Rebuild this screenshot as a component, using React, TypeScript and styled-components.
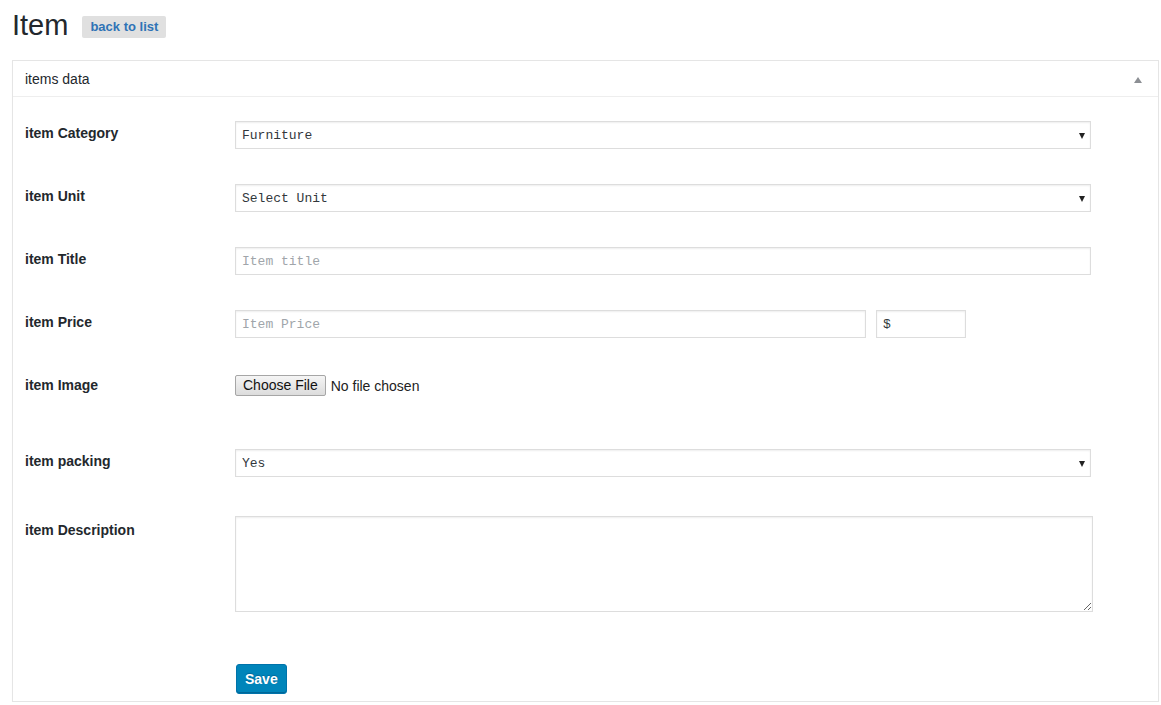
import { FC, ReactNode } from "react";
import styled, { createGlobalStyle } from "styled-components";

const GlobalStyle = createGlobalStyle`
  html, body {
    margin: 0;
    padding: 0;
    background: #fff;
  }
  body {
    font-family: "Liberation Sans", Arial, sans-serif;
    color: #23282d;
    font-size: 14px;
  }
`;

const Wrap = styled.div`
  padding: 0 2px 0 12px;
`;

const TitleBar = styled.div`
  display: flex;
  align-items: center;
  height: 60px;
  padding-bottom: 10px;
  box-sizing: border-box;
`;

const Title = styled.h1`
  margin: 0 14px 0 0;
  font-size: 29px;
  font-weight: 400;
  line-height: 1;
  color: #23282d;
`;

const BackLink = styled.a`
  display: inline-block;
  padding: 0 8px;
  height: 22px;
  line-height: 22px;
  background: #e0e0e0;
  border-radius: 2px;
  color: #2f73b6;
  font-weight: 700;
  font-size: 13px;
  text-decoration: none;
  margin-top: 3px;
`;

const Card = styled.div`
  border: 1px solid #e5e5e5;
  background: #fff;
  box-shadow: 0 1px 1px rgba(0, 0, 0, 0.04), 0 4px 0 #eeeeee;
`;

const CardHeader = styled.div`
  display: flex;
  align-items: center;
  justify-content: space-between;
  height: 35px;
  padding: 0 16px 0 12px;
  border-bottom: 1px solid #eeeeee;
  font-size: 14px;
  color: #23282d;
`;

const Toggle = styled.span`
  width: 0;
  height: 0;
  border-left: 4px solid transparent;
  border-right: 4px solid transparent;
  border-bottom: 6px solid #8c8f94;
  margin-top: 2px;
`;

const CardBody = styled.div`
  padding: 24px 12px 7px;
`;

const Row = styled.div<{ $space?: number }>`
  display: grid;
  grid-template-columns: 210px 1fr;
  align-items: start;
  margin-top: ${(p) => p.$space ?? 0}px;
`;

const Label = styled.label<{ $lift?: number }>`
  font-weight: 700;
  font-size: 14px;
  line-height: 20px;
  padding-top: ${(p) => p.$lift ?? 2}px;
  color: #23282d;
`;

const fieldBase = `
  box-sizing: border-box;
  height: 28px;
  border: 1px solid #dddddd;
  box-shadow: inset 0 1px 2px rgba(0, 0, 0, 0.07);
  background: #fff;
  color: #32373c;
  font-family: "Liberation Mono", "DejaVu Sans Mono", monospace;
  font-size: 13px;
  padding: 1px 6px 0;
  outline: none;
  &::placeholder {
    color: #a0a5aa;
  }
`;

const TextInput = styled.input<{ $width: number }>`
  ${fieldBase}
  width: ${(p) => p.$width}px;
`;

const InlineFields = styled.div`
  display: flex;
  gap: 10px;
`;

const SelectBox = styled.div`
  position: relative;
  width: 856px;

  &::after {
    content: "";
    position: absolute;
    right: 6px;
    top: 12px;
    border-left: 3.5px solid transparent;
    border-right: 3.5px solid transparent;
    border-top: 6px solid #222;
    pointer-events: none;
  }
`;

const Select = styled.select`
  ${fieldBase}
  width: 100%;
  appearance: none;
  -webkit-appearance: none;
  border-radius: 0;
  padding-right: 20px;
`;

const FileField = styled.div`
  display: flex;
  align-items: center;
  gap: 5px;
  font-size: 14px;
  color: #222;
`;

const FileButton = styled.label`
  box-sizing: border-box;
  display: inline-block;
  height: 21px;
  line-height: 19px;
  padding: 0 7px;
  border: 1px solid #a6a6a6;
  border-radius: 2px;
  background: linear-gradient(#f5f5f5, #dcdcdc);
  color: #111;
  font-size: 14px;

  input {
    display: none;
  }
`;

const TextArea = styled.textarea`
  box-sizing: border-box;
  width: 858px;
  height: 96px;
  border: 1px solid #dddddd;
  box-shadow: inset 0 1px 2px rgba(0, 0, 0, 0.07);
  font-family: "Liberation Mono", monospace;
  font-size: 13px;
  outline: none;
  display: block;
`;

const ActionRow = styled.div`
  display: flex;
  padding-left: 211px;
  margin-top: 52px;
`;

const SaveButton = styled.button`
  box-sizing: border-box;
  height: 30px;
  padding: 0 8px;
  background: #0085ba;
  border: 1px solid #0073aa;
  border-radius: 3px;
  box-shadow: inset 0 -1px 0 #006799;
  color: #fff;
  font-family: "Liberation Sans", Arial, sans-serif;
  font-weight: 700;
  font-size: 14px;
  text-shadow: 0 -1px 1px #006799;
  cursor: pointer;
`;

const SelectField: FC<{ value: string; options: string[] }> = ({ value, options }) => (
  <SelectBox>
    <Select defaultValue={value}>
      {options.map((o) => (
        <option key={o}>{o}</option>
      ))}
    </Select>
  </SelectBox>
);

const FieldRow: FC<{ label: string; space?: number; lift?: number; children: ReactNode }> = ({
  label,
  space,
  lift,
  children,
}) => (
  <Row $space={space}>
    <Label $lift={lift}>{label}</Label>
    <div>{children}</div>
  </Row>
);

const App: FC = () => {
  return (
    <>
      <GlobalStyle />
      <Wrap>
        <TitleBar>
          <Title>Item</Title>
          <BackLink href="#">back to list</BackLink>
        </TitleBar>
        <Card>
          <CardHeader>
            <span>items data</span>
            <Toggle />
          </CardHeader>
          <CardBody>
            <FieldRow label="item Category">
              <SelectField value="Furniture" options={["Furniture", "Electronics", "Clothing"]} />
            </FieldRow>
            <FieldRow label="item Unit" space={35}>
              <SelectField value="Select Unit" options={["Select Unit", "Piece", "Kg", "Box"]} />
            </FieldRow>
            <FieldRow label="item Title" space={35}>
              <TextInput $width={856} placeholder="Item title" />
            </FieldRow>
            <FieldRow label="item Price" space={35}>
              <InlineFields>
                <TextInput $width={631} placeholder="Item Price" />
                <TextInput $width={90} defaultValue="$" />
              </InlineFields>
            </FieldRow>
            <FieldRow label="item Image" space={37} lift={0}>
              <FileField>
                <FileButton>
                  Choose File
                  <input type="file" />
                </FileButton>
                <span>No file chosen</span>
              </FileField>
            </FieldRow>
            <FieldRow label="item packing" space={53}>
              <SelectField value="Yes" options={["Yes", "No"]} />
            </FieldRow>
            <FieldRow label="item Description" space={39} lift={4}>
              <TextArea />
            </FieldRow>
            <ActionRow>
              <SaveButton>Save</SaveButton>
            </ActionRow>
          </CardBody>
        </Card>
      </Wrap>
    </>
  );
};

export default App;
